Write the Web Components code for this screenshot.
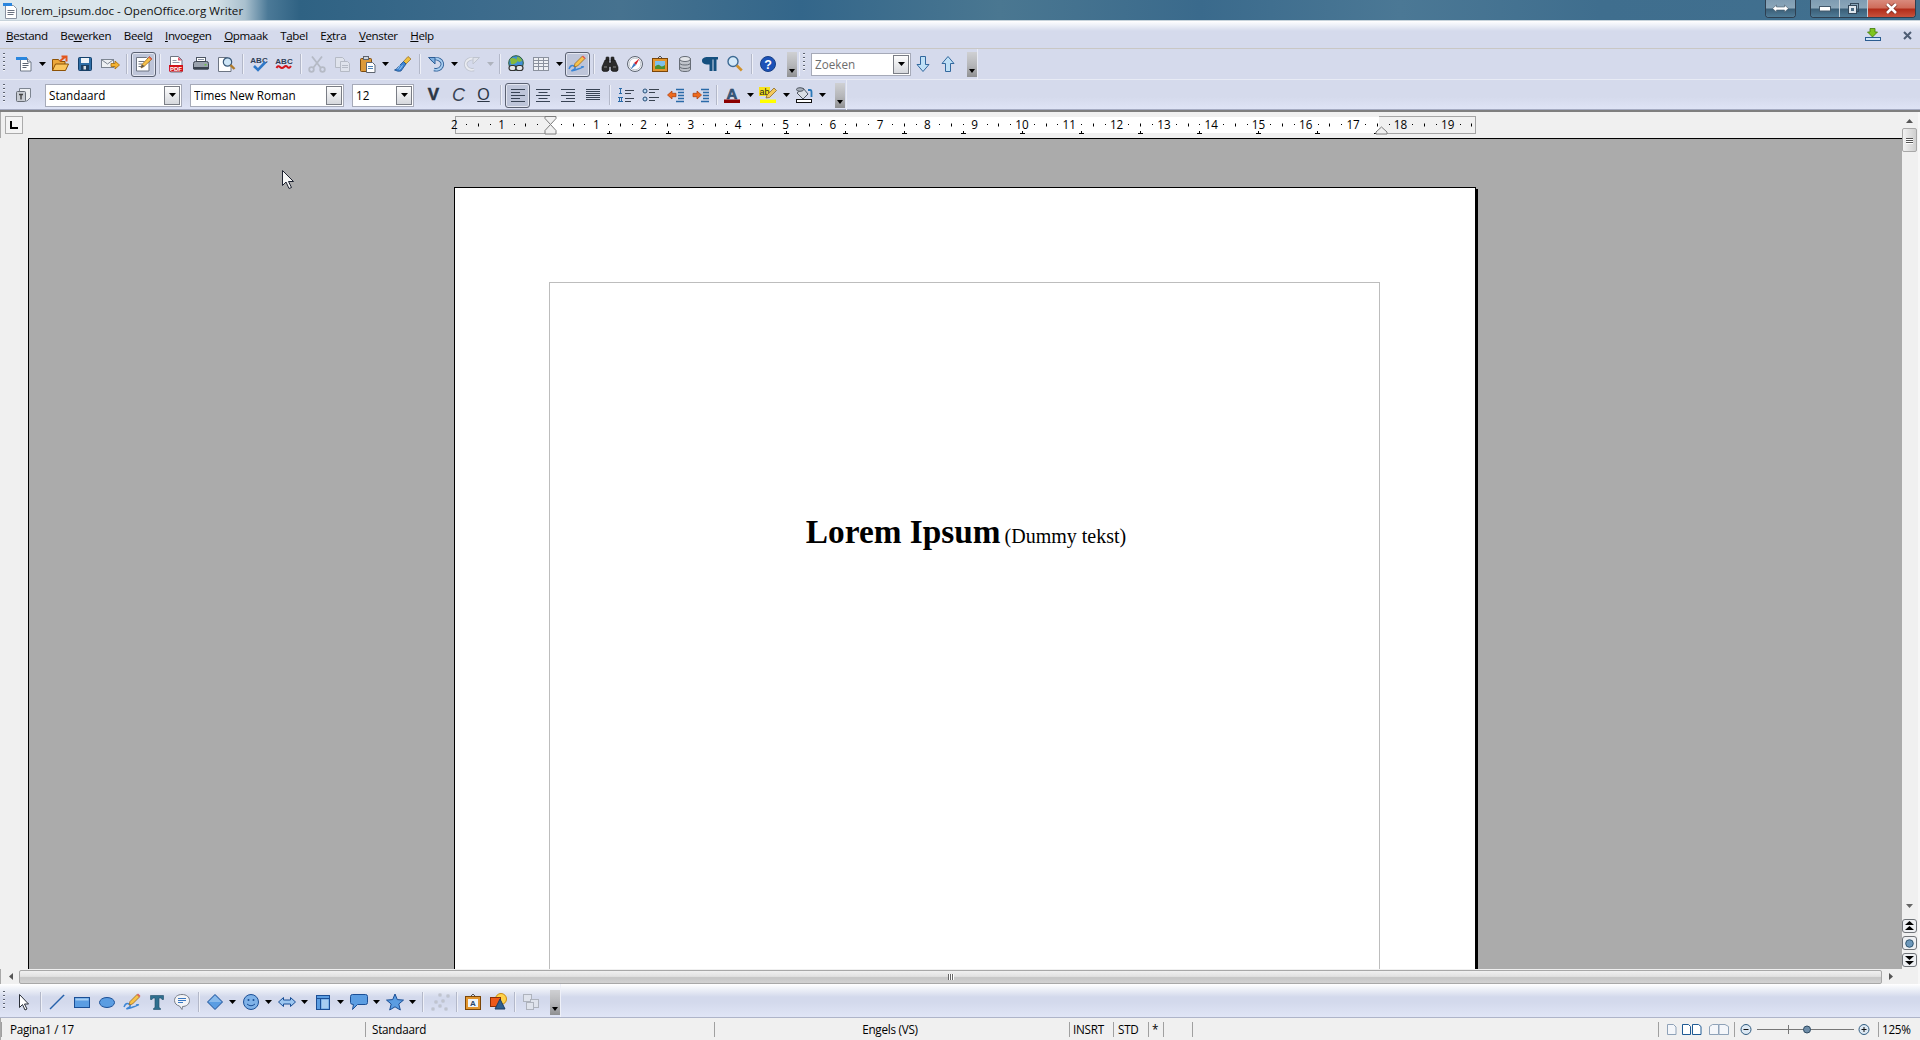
<!DOCTYPE html>
<html lang="nl">
<head>
<meta charset="utf-8">
<title>lorem_ipsum.doc - OpenOffice.org Writer</title>
<style>
html,body{margin:0;padding:0;height:1040px;overflow:hidden;background:#f0f0f0}
</style>
</head>
<body>
<oo-app>
  <oo-titlebar slot="title">lorem_ipsum.doc - OpenOffice.org Writer</oo-titlebar>
  <oo-menubar slot="menu"></oo-menubar>
  <oo-bars slot="bars">
    <oo-row end="978">
      <oo-grip w="12.5"></oo-grip>
      <oo-btn i="new"></oo-btn><oo-dd w="10"></oo-dd>
      <oo-btn i="open"></oo-btn><oo-btn i="save"></oo-btn><oo-btn i="mail"></oo-btn><oo-sep></oo-sep>
      <oo-btn i="edit" pressed></oo-btn><oo-sep></oo-sep>
      <oo-btn i="pdf"></oo-btn><oo-btn i="print"></oo-btn><oo-btn i="preview"></oo-btn><oo-sep></oo-sep>
      <oo-btn i="spell"></oo-btn><oo-btn i="autospell"></oo-btn><oo-sep></oo-sep>
      <oo-btn i="cut"></oo-btn><oo-btn i="copy"></oo-btn><oo-btn i="paste"></oo-btn><oo-dd></oo-dd>
      <oo-btn i="brush"></oo-btn><oo-sep></oo-sep>
      <oo-btn i="undo"></oo-btn><oo-dd></oo-dd><oo-btn i="redo"></oo-btn><oo-dd off></oo-dd><oo-sep></oo-sep>
      <oo-btn i="link"></oo-btn><oo-btn i="table"></oo-btn><oo-dd></oo-dd>
      <oo-btn i="draw" pressed></oo-btn><oo-sep></oo-sep>
      <oo-btn i="find"></oo-btn><oo-btn i="nav"></oo-btn><oo-btn i="gallery"></oo-btn><oo-btn i="db"></oo-btn><oo-btn i="pil"></oo-btn><oo-btn i="zoom"></oo-btn><oo-sep></oo-sep>
      <oo-btn i="help"></oo-btn>
      <oo-over style="margin-left:6.5px"></oo-over>
      <oo-grip w="11" style="margin-left:2px;border-left:1px solid #eceef7"></oo-grip>
      <oo-combo w="100" disabled>Zoeken</oo-combo>
      <oo-btn i="down" style="margin-left:-1px"></oo-btn><oo-btn i="up"></oo-btn>
      <oo-over style="margin-left:6.5px"></oo-over>
    </oo-row>
    <oo-row end="847">
      <oo-grip w="11"></oo-grip>
      <oo-btn i="styles"></oo-btn>
      <oo-combo w="137" style="margin-left:9px">Standaard</oo-combo>
      <oo-combo w="153.5" style="margin-left:8px">Times New Roman</oo-combo>
      <oo-combo w="62" style="margin-left:8.5px">12</oo-combo>
      <oo-btn style="margin-left:7px" t="V" class="b"></oo-btn>
      <oo-btn t="C"></oo-btn><oo-btn t="O"></oo-btn><oo-sep w="9"></oo-sep>
      <oo-btn i="al" pressed></oo-btn><oo-btn i="ac"></oo-btn><oo-btn i="ar"></oo-btn><oo-btn i="aj"></oo-btn><oo-sep></oo-sep>
      <oo-btn i="num"></oo-btn><oo-btn i="bul"></oo-btn><oo-btn i="dec"></oo-btn><oo-btn i="inc"></oo-btn><oo-sep w="6.5"></oo-sep>
      <oo-btn i="fc"></oo-btn><oo-dd></oo-dd><oo-btn i="hl"></oo-btn><oo-dd></oo-dd><oo-btn i="bg"></oo-btn><oo-dd></oo-dd>
      <oo-over style="margin-left:7.5px"></oo-over>
    </oo-row>
  </oo-bars>
  <oo-ruler slot="ruler"></oo-ruler>
  <oo-workspace slot="work">
    <oo-page>
      <b style="font-size:33.33px">Lorem Ipsum</b> <span style="font-size:20px">(Dummy tekst)</span>
    </oo-page>
  </oo-workspace>
  <oo-vscroll slot="vs"></oo-vscroll>
  <oo-hscroll slot="hs"></oo-hscroll>
  <oo-drawbar slot="draw">
    <oo-grip w="11"></oo-grip>
    <oo-btn i="sel"></oo-btn><oo-sep></oo-sep>
    <oo-btn i="line"></oo-btn><oo-btn i="rect"></oo-btn><oo-btn i="ell"></oo-btn><oo-btn i="free"></oo-btn><oo-btn i="tt"></oo-btn><oo-btn i="cal"></oo-btn><oo-sep></oo-sep>
    <oo-btn i="dia"></oo-btn><oo-dd></oo-dd><oo-btn i="smile"></oo-btn><oo-dd></oo-dd><oo-btn i="arr"></oo-btn><oo-dd></oo-dd><oo-btn i="flow"></oo-btn><oo-dd></oo-dd><oo-btn i="bub"></oo-btn><oo-dd></oo-dd><oo-btn i="star"></oo-btn><oo-dd></oo-dd><oo-sep w="9"></oo-sep>
    <oo-btn i="pts"></oo-btn><oo-sep></oo-sep>
    <oo-btn i="fw"></oo-btn><oo-btn i="ext"></oo-btn><oo-sep></oo-sep>
    <oo-btn i="grp"></oo-btn>
    <oo-over style="margin-left:7px"></oo-over>
  </oo-drawbar>
  <oo-status slot="status"></oo-status>
</oo-app>
<script>
const UI='"Open Sans","Noto Sans","Liberation Sans",sans-serif';
const S='#1b4f96',F='#5b9de2';
const lines=(a)=>a.map(([x1,x2,y])=>`M${x1} ${y}H${x2}`).join('');
const ICONS={
new:`<path d="M5.5 4.5h7l3.500 3.500v9h-10.500z" fill="#fff" stroke="#6f7887"/><path d="M12.500 4.500v3.500h3.500" fill="#dde2ea" stroke="#6f7887"/><rect x="1" y="3" width="11" height="3" fill="#2a86de"/><path d="M7.500 9.500h6M7.500 11.500h6M7.500 13.500h4" stroke="#5c6472"/>`,
open:`<path d="M2.500 5.500h6l1.500 2h5v9h-12.500z" fill="#eda83a" stroke="#8d5206"/><path d="M2.500 16.500l3-6.500h13l-3 6.500z" fill="#fbc65d" stroke="#8d5206"/><path d="M10 7l5-4M11.500 2.500h5v5" fill="none" stroke="#e2561d" stroke-width="2"/>`,
save:`<rect x="3.500" y="3.500" width="13" height="13" rx="1" fill="#2f6ea6" stroke="#14406b"/><rect x="6" y="4" width="8" height="5" fill="#eef3f8"/><rect x="6" y="11" width="8" height="5.500" fill="#1d3f60"/><rect x="8.500" y="12" width="2.500" height="3.500" fill="#d6dde5"/>`,
mail:`<rect x="1.500" y="5.500" width="12" height="8" fill="#eef0f3" stroke="#7d8591"/><path d="M2 6l5.500 4 5.500-4" fill="none" stroke="#7d8591"/><path d="M11 9.500h4v-2.500l4.500 4-4.500 4v-2.500h-4z" fill="#f4b230" stroke="#a56a0c" stroke-width=".8"/>`,
edit:`<path d="M3.500 3.500h10l2.500 2.500v11h-12.500z" fill="#fff" stroke="#6d7583"/><path d="M5.500 7.500h6M5.500 10h4M5.500 12.500h3" stroke="#6d7583"/><path d="M8 14l1-3.500 7.500-8 2.500 2.500-8 7.500z" fill="#f7c24a" stroke="#8f5c10" stroke-width=".7"/><path d="M15.500 3.500l1-1 2.500 2.500-1 1z" fill="#e25a5a"/><path d="M8 14l1-3.500 2.500 1.500z" fill="#555"/>`,
pdf:`<path d="M4.500 2.500h8l3.500 3.500v12h-11.500z" fill="#fff" stroke="#6d7583"/><path d="M6.500 6.500h4M6.500 8.500h7" stroke="#9098a6"/><path d="M12 3v3.500h4z" fill="#e0566a"/><rect x="3" y="11" width="14" height="6.500" fill="#d3131a"/><text x="10" y="16.500" font-size="6" font-weight="700" text-anchor="middle" fill="#fff" font-family="Liberation Sans">PDF</text>`,
print:`<rect x="5.500" y="3.500" width="9" height="5" fill="#fff" stroke="#4c5563"/><path d="M7 5.500h6" stroke="#8792a3"/><path d="M2.500 9.500q0-2 2-2h11q2 0 2 2v5.500h-15z" fill="#9aa2ad" stroke="#3e4652"/><rect x="3" y="13" width="14" height="2.500" fill="#39424e"/><rect x="13.500" y="10" width="2" height="1.500" fill="#6cc04a"/>`,
preview:`<path d="M2.500 3.500h9l3.500 3.500v10.500h-12.500z" fill="#fff" stroke="#6d7583"/><circle cx="11.500" cy="8" r="4.200" fill="#cfe6f7" stroke="#3b5a7a" stroke-width="1.200"/><path d="M14.500 11l4 4" stroke="#b07a2a" stroke-width="2.400"/>`,
spell:`<text x="10" y="8.500" font-size="8" font-weight="700" text-anchor="middle" fill="#2e3f57" font-family="Liberation Sans">ABC</text><path d="M5 12l4 4 7.500-8" fill="none" stroke="#2f78c8" stroke-width="2.600"/>`,
autospell:`<text x="10" y="9.500" font-size="8" font-weight="700" text-anchor="middle" fill="#2e3f57" font-family="Liberation Sans">ABC</text><path d="M2.500 14q1.500-3 3.500-1t4 0 3.500 0 3.500-1" fill="none" stroke="#d4131a" stroke-width="2"/>`,
cut:`<g fill="none" stroke="#b5bac5" stroke-width="1.800"><path d="M5 2.500l8.500 11M15 2.500l-8.500 11"/><circle cx="4.500" cy="15.500" r="2.300"/><circle cx="15.500" cy="15.500" r="2.300"/></g>`,
copy:`<g fill="#dfe3ec" stroke="#b5bac5"><path d="M3.500 3.500h7l2 2v8h-9z"/><path d="M8.500 7.500h7l2 2v8h-9z"/></g><path d="M10 11.500h6M10 13.500h6" stroke="#b5bac5"/>`,
paste:`<rect x="3.500" y="4.500" width="11" height="13" rx="1" fill="#dd9a3a" stroke="#7b4c10"/><rect x="6.500" y="2.500" width="5" height="3" fill="#cfd5dd" stroke="#5d6470"/><path d="M9.500 8.500h6l2.500 2.500v7.500h-8.500z" fill="#fff" stroke="#5d6470"/><path d="M11 12.500h5M11 14.500h5" stroke="#4f82b8"/>`,
brush:`<path d="M15 2.500l3 2.500-5 5-2.500-2.500z" fill="#eec03f" stroke="#93691a" stroke-width=".7"/><path d="M10.500 7.500l2.500 2.500-5 7q-3 1-6.500-1 3-1 3.500-3z" fill="#3e86d4" stroke="#1a4d88" stroke-width=".8"/><path d="M7 11l-2.500 4M9.500 11.500l-3 4" stroke="#bcdcf7" stroke-width=".8"/>`,
undo:`<path d="M5 6.500a6.500 5.500 0 1 1 3 9" fill="none" stroke="#2f5f97" stroke-width="3.600"/><path d="M5 6.500a6.500 5.500 0 1 1 3 9" fill="none" stroke="#a8cdf0" stroke-width="1.800"/><path d="M2.500 3.500h6.500v6.500z" fill="#7fb0e0" stroke="#2f5f97"/>`,
redo:`<g fill="none"><path d="M15 6.500a6.500 5.500 0 1 0-3 9" stroke="#bfc4cf" stroke-width="3.600"/><path d="M15 6.500a6.500 5.500 0 1 0-3 9" stroke="#e9ebf1" stroke-width="1.800"/></g><path d="M17.500 3.500h-6.500v6.500z" fill="#dfe2ea" stroke="#bfc4cf"/>`,
link:`<circle cx="10" cy="9" r="7.300" fill="#3f8ed8" stroke="#2a5c3a"/><path d="M4 5q3-2 6 0t0 4-5 1zM11 3q4 0 5 4l-3 1q-3-2-2-5z" fill="#86b93c"/><rect x="3" y="11.500" width="7" height="5" rx="2.500" fill="#e4e6ea" stroke="#333" stroke-width="1.200"/><rect x="10" y="11.500" width="7" height="5" rx="2.500" fill="#e4e6ea" stroke="#333" stroke-width="1.200"/>`,
table:`<rect x="2.500" y="3.500" width="15" height="13" fill="#eef0f5" stroke="#8b919e"/><path d="M2.500 6.500h15M2.500 9.500h15M2.500 12.500h15M7.500 3.500v13M12.500 3.500v13" stroke="#8b919e"/>`,
draw:`<path d="M2 15q2-5 5-3t-1 4 5-1 3-2" fill="none" stroke="#3c86d6" stroke-width="1.500"/><path d="M7 13l1-3.500 7.500-7.500 2.500 2.500-7.500 7.500z" fill="#f7c24a" stroke="#8f5c10" stroke-width=".7"/><path d="M15 2.500l1-1 2.500 2.500-1 1z" fill="#e25a5a"/>`,
find:`<g fill="#2b2b2b" stroke="#111" stroke-width=".6"><rect x="6" y="3" width="3" height="4" rx=".8"/><rect x="11" y="3" width="3" height="4" rx=".8"/><path d="M5 6h4v3h2v-3h4l3 7v3q0 1.500-3.500 1.500t-3.500-2v-3h-2v3q0 2-3.500 2t-3.500-1.500v-3z"/></g><path d="M4 13h3M13 13h3" stroke="#888"/>`,
nav:`<circle cx="10" cy="10" r="7.500" fill="#eef1f6" stroke="#5d6470"/><circle cx="10" cy="10" r="5.800" fill="#fff" stroke="#c7ccd4"/><path d="M14.500 4.500l-3.500 6.500-2-2z" fill="#d5202a"/><path d="M5.500 15.500l3.500-6.500 2 2z" fill="#3a78c2"/>`,
gallery:`<path d="M7 5l3-3 3 3" fill="none" stroke="#555"/><rect x="2.500" y="4.500" width="15" height="13" fill="#e1952e" stroke="#7b4608"/><rect x="5" y="7" width="10" height="8" fill="#7fc0ea"/><path d="M5 15v-2.500q3-3 5-1t5-.5v4z" fill="#4a8f2f"/>`,
db:`<path d="M4.500 5v10q0 2.500 5.500 2.500t5.500-2.500v-10z" fill="#bfc3ca" stroke="#666c75"/><ellipse cx="10" cy="5" rx="5.500" ry="2.500" fill="#e3e5e9" stroke="#666c75"/><path d="M4.500 8.500q0 2.500 5.500 2.500t5.500-2.500M4.500 12q0 2.500 5.500 2.500t5.500-2.500" fill="none" stroke="#666c75"/>`,
pil:`<path d="M7.500 3H18v2.500h-1.500V17h-3V5.500h-1V17h-3v-6.500H8C4.500 10.500 2 9.500 2 6.800S4.500 3 7.500 3z" fill="#15507f"/>`,
zoom:`<circle cx="8" cy="7.500" r="5" fill="#d4e9f9" stroke="#3d6a93" stroke-width="1.400"/><path d="M11.800 11.500l5 5" stroke="#d0912a" stroke-width="2.600"/>`,
help:`<circle cx="10" cy="10" r="7.500" fill="#1c52b8" stroke="#173f86"/><text x="10" y="14.500" font-size="12.500" font-weight="700" text-anchor="middle" fill="#fff" font-family="Liberation Sans">?</text>`,
down:`<path d="M7.500 2.500h5v8h3.500l-6 7-6-7h3.500z" fill="#bfe0f6" stroke="#32689e" stroke-linejoin="round"/>`,
up:`<path d="M7.500 17.500h5v-8h3.500l-6-7-6 7h3.500z" fill="#bfe0f6" stroke="#32689e" stroke-linejoin="round"/>`,
styles:`<path d="M5.500 3.500h11v9l-3.500 3.500h-7.500z" fill="#eceef1" stroke="#7d8591"/><rect x="2.500" y="6.500" width="9" height="10" rx="1" fill="#c8ccd3" stroke="#666c75"/><path d="M5 9.500h4M7 9.500v5" stroke="#444" stroke-width="1.400"/>`,
al:`<path d="${lines([[3,17,4.500],[3,12,7.500],[3,17,10.500],[3,12,13.500],[3,17,16.500]])}" stroke="#384354"/>`,
ac:`<path d="${lines([[3,17,4.500],[5.500,14.500,7.500],[3,17,10.500],[5.500,14.500,13.500],[3,17,16.500]])}" stroke="#384354"/>`,
ar:`<path d="${lines([[3,17,4.500],[8,17,7.500],[3,17,10.500],[8,17,13.500],[3,17,16.500]])}" stroke="#384354"/>`,
aj:`<path d="${lines([[3,17,4.500],[3,17,6.500],[3,17,8.500],[3,17,10.500],[3,17,12.500],[3,17,14.500]])}" stroke="#384354"/>`,
num:`<path d="M3 3.500h3M4.500 3.500v5M3 8.500h3M2 12.500h5M3.500 12.500v4.500M5.500 12.500v4.500M2 16.500h5" stroke="#2a6aa8" fill="none"/><path d="M9 5.500h9M9 8.500h6M9 13.500h9M9 16.500h6" stroke="#3a4350"/>`,
bul:`<circle cx="4" cy="6" r="2" fill="#b8d7f0" stroke="#274e78"/><circle cx="4" cy="14" r="2" fill="#b8d7f0" stroke="#274e78"/><path d="M8 4.500h10M8 7.500h6M8 12.500h10M8 15.500h6" stroke="#3a4350"/>`,
dec:`<path d="M1.500 10l4.500-4v2.300h4v3.400h-4v2.300z" fill="#ee6a1c" stroke="#a93a0a" stroke-width=".7"/><path d="M10 4.500h8M12 7.500h6M12 10.500h6M12 13.500h6M10 16.500h8" stroke="#2a6aa8" stroke-width="1.300"/>`,
inc:`<path d="M10.500 10l-4.500-4v2.300h-4v3.400h4v2.300z" fill="#ee6a1c" stroke="#a93a0a" stroke-width=".7"/><path d="M10 4.500h8M12 7.500h6M12 10.500h6M12 13.500h6M10 16.500h8" stroke="#2a6aa8" stroke-width="1.300"/>`,
fc:`<text x="10" y="13.500" font-size="15" font-weight="700" text-anchor="middle" fill="#3a5e82" stroke="#1c3553" stroke-width=".5" font-family="Liberation Sans">A</text><rect x="2" y="14.500" width="16" height="3.500" fill="#8b0000"/>`,
hl:`<rect x="1" y="2" width="11" height="9" fill="#f7e21a"/><text x="6.500" y="9.500" font-size="9" text-anchor="middle" fill="#222" font-family="Liberation Sans">ab</text><path d="M8 13l1-3 7-7 2.500 2.500-7 7z" fill="#f4c95a" stroke="#7d5a1a" stroke-width=".7"/><rect x="2" y="14.500" width="16" height="3.500" fill="#ffff00"/>`,
bg:`<path d="M3 8l6-5 5 6-5 5z" fill="#d9dde3" stroke="#4e5560"/><ellipse cx="6" cy="4.500" rx="3.500" ry="1.800" fill="#aab1bc" stroke="#4e5560"/><path d="M14 5h2q1.500 0 1.500 2v5" fill="none" stroke="#2a78b8" stroke-width="1.800"/><rect x="2.500" y="14.500" width="15" height="3" fill="#fff" stroke="#111"/>`,
sel:`<path d="M5.500 2.500v13l3-3 2.500 5.500 2-1-2.500-5h4z" fill="#fff" stroke="#2a2f38" stroke-linejoin="round"/>`,
line:`<path d="M3 17L17 3" stroke="${S}" stroke-width="1.200"/><path d="M3.700 17L17.700 3" stroke="${F}" stroke-width=".7"/>`,
rect:`<rect x="2.500" y="5.500" width="15" height="10" fill="${F}" stroke="${S}"/><rect x="3.500" y="6.500" width="13" height="2" fill="#a6cdf2"/>`,
ell:`<ellipse cx="10" cy="10.500" rx="7.500" ry="5" fill="${F}" stroke="${S}"/>`,
free:`<path d="M2 15q2-5 5-3t-1 4 5-1 3-2" fill="none" stroke="#3c86d6" stroke-width="1.500"/><path d="M7 13l1-3.500 7-7 2.500 2.500-7 7z" fill="#f7c24a" stroke="#8f5c10" stroke-width=".7"/><path d="M15 2.500l1-1 2.500 2.500-1 1z" fill="#e25a5a"/>`,
tt:`<path d="M3.500 3.500h13v4h-1.500l-1-1.500h-2v9.500l1.500 1v1h-7v-1l1.500-1v-9.500h-2l-1 1.500h-1.500z" fill="#2f6f8f" stroke="#1e4c66" stroke-width=".6"/>`,
cal:`<path d="M10 2.500c4.500 0 7.500 2.500 7.500 6s-3 6-7 6l-.5 3-2.500-3.500c-3-.5-5-3-5-5.500 0-3.500 3-6 7.500-6z" fill="#f3f4f7" stroke="#777d88"/><path d="M6 6.500h8M6 8.500h8M6 10.500h5" stroke="#3a78c2"/>`,
dia:`<path d="M10 2.500l7.500 7.500-7.500 7.500-7.500-7.500z" fill="${F}" stroke="${S}"/><path d="M10 3.500l-6.500 6.500h13z" fill="#9cc6f0" opacity=".7"/>`,
smile:`<circle cx="10" cy="10" r="7.500" fill="#7fb2e8" stroke="${S}"/><circle cx="7.500" cy="8" r="1" fill="${S}"/><circle cx="12.500" cy="8" r="1" fill="${S}"/><path d="M6 12q4 3.500 8 0" fill="none" stroke="${S}"/>`,
arr:`<path d="M1.500 10l5-4.500v2.500h7v-2.500l5 4.500-5 4.500v-2.500h-7v2.500z" fill="#9cc6f0" stroke="${S}"/>`,
flow:`<rect x="3.500" y="3.500" width="13" height="14" fill="${F}" stroke="${S}"/><path d="M3.500 6.500h13M7.500 6.500v11" stroke="${S}"/><rect x="8.500" y="7.500" width="7" height="9" fill="#a6cdf2"/>`,
bub:`<path d="M3.500 2.500h13q2 0 2 2v6q0 2-2 2h-8l-5 5 1-5q-3 0-3-2v-6q0-2 2-2z" fill="${F}" stroke="${S}"/>`,
star:`<path d="M10 2l2.300 5.600 6.200.5-4.700 3.900 1.500 6L10 14.800 4.700 18l1.500-6-4.700-3.900 6.200-.5z" fill="${F}" stroke="${S}"/>`,
pts:`<g fill="#dfe3ec" stroke="#aeb3bd" stroke-width=".8"><rect x="9" y="2" width="2" height="2"/><rect x="2" y="16" width="2" height="2"/><rect x="15" y="16" width="2" height="2"/><rect x="5" y="9" width="2" height="2"/><rect x="12" y="8" width="2" height="2"/><rect x="9" y="13" width="2" height="2"/><rect x="17" y="3" width="2" height="2"/></g>`,
fw:`<path d="M7 5l3-3 3 3" fill="none" stroke="#555"/><rect x="2.500" y="4.500" width="15" height="13" fill="#e1952e" stroke="#7b4608"/><rect x="5" y="7" width="10" height="8" fill="#eef3f8"/><text x="10" y="14" font-size="8" font-weight="700" text-anchor="middle" fill="#27466a" font-family="Liberation Sans">A</text>`,
ext:`<circle cx="13" cy="7" r="5.500" fill="#ffd24a" stroke="#c98a10"/><rect x="2.500" y="5.500" width="10" height="9" fill="#ee5a1a" stroke="#8d2f06"/><path d="M12 7l5 10h-10z" fill="#2f5f8f" stroke="#1c3d60"/>`,
grp:`<g fill="#dfe3ec" stroke="#aeb3bd"><rect x="2.500" y="2.500" width="8" height="7"/><rect x="9.500" y="7.500" width="8" height="8"/><rect x="5.500" y="10.500" width="7" height="7"/></g>`,
dl:`<rect x="1.500" y="9.500" width="15" height="3" fill="#cfe4f7" stroke="#2a5c90"/><path d="M6 .5h5v3.500h2.500l-5 5-5-5h2.500z" fill="#7fc51e" stroke="#3f7a08" stroke-width=".8"/>`
};
const ic=(n,w=20,h=20)=>`<svg xmlns="http://www.w3.org/2000/svg" width="${w}" height="${h}" viewBox="0 0 ${w} ${h}" style="display:block">${ICONS[n]}</svg>`;
const def=(n,css,render)=>customElements.define(n,class extends HTMLElement{
  connectedCallback(){ if(this.shadowRoot) return; const r=this.attachShadow({mode:'open'}); r.innerHTML=`<style>${css}</style>`+render(this); }
});
const arrowDown=(c='#000')=>`<svg width="7" height="4" viewBox="0 0 7 4" style="display:block"><path d="M0 0h7L3.500 4z" fill="${c}"/></svg>`;

def('oo-app',`
:host{display:flex;flex-direction:column;width:1920px;height:1040px;overflow:hidden;background:#f0f0f0;font-family:${UI};color:#000}
.body{display:flex;height:857px}
.main{display:flex;flex-direction:column;width:1902px}
.work{flex:1;min-height:0;display:flex}
`,()=>`<slot name="title"></slot><slot name="menu"></slot><slot name="bars"></slot>
<div class="body"><div class="main"><slot name="ruler"></slot><div class="work"><slot name="work"></slot></div></div><slot name="vs"></slot></div>
<slot name="hs"></slot><slot name="draw"></slot><slot name="status"></slot>`);

def('oo-titlebar',`
:host{display:flex;align-items:flex-start;height:21px;box-sizing:border-box;border-bottom:1px solid #c7d3db;
background:linear-gradient(90deg,#dde8ee 0,#d5e1e8 215px,#a9c0ce 245px,#4b7997 268px,#2f6283 300px,#3c6b8c 480px,#46728f 620px,#33668a 800px,#4a7791 1000px,#3a6a8c 1200px,#4b7895 1400px,#3f6e8e 1600px,#41708f 1920px);
font:11.6px ${UI};position:relative}
.ico{width:16px;height:18px;margin:2px 0 0 3px}
.t{margin-left:2px;line-height:21px;white-space:nowrap;color:#111}
.ctl{margin-left:auto;display:flex;margin-right:4px}
.g{display:flex;height:18px;box-sizing:border-box;border:1px solid #2e3f50;border-top:0;border-radius:0 0 4px 4px;overflow:hidden;box-shadow:0 0 0 1px rgba(255,255,255,.35) inset}
.b{display:flex;align-items:center;justify-content:center;height:100%;background:linear-gradient(#7f9cb2,#8aa6b9 45%,#3b5f78 55%,#4f7b96)}
.b+.b{border-left:1px solid #c5d0d9}
.c{background:linear-gradient(#d98a7c,#cf6d5b 45%,#b22d1a 55%,#c8523c)}
`,()=>`<span class="ico"><svg width="16" height="18" viewBox="0 0 16 18"><path d="M2.500 3.500h8l3 3v10h-11z" fill="#fff" stroke="#8892a0"/><rect x="0" y="1" width="9" height="3" fill="#2a86de"/><path d="M4.500 8.500h7M4.500 10.500h7M4.500 12.500h6" stroke="#6a7280"/></svg></span>
<span class="t"><slot></slot></span>
<span class="ctl">
<span class="g" style="width:31px;margin-right:14px"><span class="b" style="width:100%"><svg width="17" height="9" viewBox="0 0 17 9"><path d="M.5 4.500L4.500 1v2h8V1l4 3.500-4 3.500V6h-8v2z" fill="#fff" stroke="#43586a" stroke-width=".6"/></svg></span></span>
<span class="g"><span class="b" style="width:28px"><svg width="12" height="6" viewBox="0 0 12 6"><rect x=".5" y=".5" width="11" height="4.500" fill="#fff" stroke="#43586a"/></svg></span>
<span class="b" style="width:27px"><svg width="13" height="12" viewBox="0 0 13 12"><rect x="3.500" y=".5" width="8" height="8" fill="none" stroke="#33485a"/><rect x="1.500" y="2.500" width="8" height="8" fill="#dfe6ec" stroke="#33485a"/><rect x="4" y="5" width="3" height="3" fill="#4a6a82"/></svg></span>
<span class="b c" style="width:47px"><svg width="13" height="11" viewBox="0 0 13 11"><path d="M2 1l9 9M11 1l-9 9" stroke="#7a2a1e" stroke-width="4"/><path d="M2 1l9 9M11 1l-9 9" stroke="#fff" stroke-width="2.600"/></svg></span></span>
</span>`);

def('oo-menubar',`
:host{display:flex;align-items:center;height:28px;box-sizing:border-box;border-bottom:1px solid #c9c7c4;padding:1px 0 0 6px;
background:linear-gradient(#fff 0,#eef1f8 4px,#d5daec 10px,#d5daec 100%);font:11.6px ${UI};letter-spacing:-.38px}
.m{display:flex;gap:12.6px;color:#050505;white-space:nowrap}
u{text-decoration-thickness:1px}
.r{margin-left:auto;display:flex;align-items:center}
`,()=>`<div class="m"><span><u>B</u>estand</span><span>Be<u>w</u>erken</span><span>Beel<u>d</u></span><span><u>I</u>nvoegen</span><span><u>O</u>pmaak</span><span>T<u>a</u>bel</span><span>E<u>x</u>tra</span><span><u>V</u>enster</span><span><u>H</u>elp</span></div>
<div class="r"><span style="margin-right:21px"><svg width="18" height="14" viewBox="0 0 18 14" style="display:block">${ICONS.dl}</svg></span><span style="margin-right:8px;margin-top:1px"><svg width="9" height="9" viewBox="0 0 9 9" style="display:block"><path d="M1 1l7 7M8 1l-7 7" stroke="#4e5d73" stroke-width="2"/></svg></span></div>`);

def('oo-bars',`
:host{display:block;height:63px;box-sizing:border-box;border-bottom:2px solid #7f7f7f;
background:linear-gradient(#d5daec 0,#d5daec 48px,#dfe4f6 61px);box-shadow:inset 0 -1px 0 #a5abc2}
`,()=>`<slot></slot>`);

def('oo-row',`
:host{display:flex;align-items:center;height:31px;box-sizing:border-box;border-bottom:1px solid #e8ebf5;white-space:nowrap}
:host(:last-child){border-bottom:0;height:30px}
.a{display:flex;align-items:center;height:100%;box-sizing:border-box;border-right:1px solid #e8ebf5}
`,(el)=>`<div class="a" style="width:${el.getAttribute('end')}px"><slot></slot></div>`);

def('oo-grip',`
:host{display:block;height:24px;position:relative;flex:none}
.g{position:absolute;left:3px;top:1px;width:2px;height:20px;background:repeating-linear-gradient(#5b6170 0 1px,#f2f4fa 1px 2px,transparent 2px 4px)}
`,(el)=>{el.style.width=(el.getAttribute('w')||13)+'px';return `<div class="g"></div>`});

def('oo-btn',`
:host{display:flex;flex:none;width:25px;height:25px;align-items:center;justify-content:center;box-sizing:border-box;font-family:${UI}}
:host([pressed]){border:1px solid #5a6172;border-radius:3px;background:#bec5d9;box-shadow:inset 0 0 0 1px #e3e6f1}
.t{font:700 16px "Liberation Sans",sans-serif;color:#2c3645;line-height:20px}
`,(el)=>{
  const t=el.getAttribute('t');
  if(t==='V') return `<span class="t" style="font-weight:900;font-size:17px;-webkit-text-stroke:.5px #2c3645">V</span>`;
  if(t==='C') return `<span class="t" style="font:italic 400 18px/20px 'Liberation Sans',sans-serif;color:#3a4453">C</span>`;
  if(t==='O') return `<span class="t" style="font-weight:400;font-size:16px;text-decoration:underline">O</span>`;
  return ic(el.getAttribute('i'));
});

def('oo-dd',`
:host{display:flex;flex:none;height:25px;align-items:center;justify-content:center}
`,(el)=>{el.style.width=(el.getAttribute('w')||11)+'px';return arrowDown(el.hasAttribute('off')?'#aeb3bd':'#000')});

def('oo-sep',`
:host{display:flex;flex:none;height:20px;justify-content:center}
i{display:block;width:1px;height:100%;background:#b3b8c9;box-shadow:1px 0 0 #eef0f8}
`,(el)=>{el.style.width=(el.getAttribute('w')||8)+'px';return `<i></i>`});

def('oo-over',`
:host{display:flex;flex:none;width:10px;height:25px;background:linear-gradient(#cfd0d3,#b4b5b8 55%,#8f9092);align-items:flex-end;justify-content:center;padding-bottom:4px;box-sizing:border-box}
`,()=>`<svg width="6" height="4" viewBox="0 0 6 4"><path d="M0 0h6L3 4z" fill="#000"/></svg>`);

def('oo-combo',`
:host{display:flex;flex:none;height:23px;box-sizing:border-box;border:1px solid #a6aab8;background:#fff;align-items:center;font:11.7px ${UI};color:#000;padding-left:3px;position:relative}
:host([disabled]){color:#6d6d6d}
.t{flex:1;white-space:nowrap;overflow:hidden}
.b{width:16px;height:19px;margin-right:1px;box-sizing:border-box;border:1px solid #7a7d85;background:linear-gradient(#fdfdfd,#d6d8dd);display:flex;align-items:center;justify-content:center}
`,(el)=>{el.style.width=el.getAttribute('w')+'px';return `<span class="t"><slot></slot></span><span class="b">${arrowDown()}</span>`});

def('oo-ruler',`
:host{display:flex;height:26px;position:relative;flex:none;background:#f0f0f0;border-left:1px solid #a9a9a9;box-sizing:border-box}
.tab{width:18px;height:18px;margin:4px 0 0 4px;box-sizing:border-box;border:1px solid #ababab;background:#f4f4f4;display:flex;align-items:center;justify-content:center}
svg{display:block;margin-left:426px;flex:none}
text{font:11.7px ${UI};fill:#000;text-anchor:middle}
`,()=>{
  const X=449,k=47.3,z=549;
  const x=v=>Math.round(v-X)+.5;
  let s=`<rect x="${455-X+.5}" y="4.500" width="1020" height="17" fill="none" stroke="#a4a4a4"/><rect x="${550-X}" y="5" width="829" height="17" fill="#fff"/><path d="M${550-X} 4.500H${1379-X}" stroke="#f0f0f0"/><path d="M${550-X} 21.500H${1379-X}" stroke="#f0f0f0"/>`;
  for(let n=-2;n<=19;n++){
    const c=z+n*k;
    if(n!==0) s+=`<text x="${c-X}" y="17">${Math.abs(n)}</text>`;
    [.25,.5,.75].forEach((f,i)=>{
      const p=c+f*k; if(p>1473) return;
      if(Math.abs(p-z)<6) return;
      if(i===1) s+=`<path d="M${x(p)} 11.500v3" stroke="#000"/>`;
      else s+=`<rect x="${Math.round(p-X)}" y="12" width="1" height="1" fill="#000"/>`;
    });
  }
  for(let t=1;t<=14;t++){
    const p=550+59*t; if(p>1379) break;
    s+=`<path d="M${x(p)} 19v3M${x(p)-2.500} 21.500h5" stroke="#000" fill="none"/>`;
  }
  s+=`<path d="M${550.500-X-5.500} 4.500h11v2l-5.500 6 5.500 6v3.500h-11v-3.500l5.500-6-5.500-6z" fill="#f0f0f0" stroke="#7c7c7c"/>`;
  s+=`<path d="M${1381.500-X} 15l5.500 5v2h-11v-2z" fill="#f0f0f0" stroke="#7c7c7c"/>`;
  return `<div class="tab"><svg style="margin:0" width="8" height="8" viewBox="0 0 8 8"><path d="M1 0v7h7" fill="none" stroke="#000" stroke-width="2"/></svg></div><svg width="1040" height="26" viewBox="0 0 1040 26">${s}</svg>`;
});

def('oo-workspace',`
:host{display:block;width:1874px;margin-left:28px;height:100%;box-sizing:border-box;border-left:1px solid #000;border-top:1px solid #000;background:#ababab;overflow:hidden;position:relative}
.cur{position:absolute;left:253px;top:31px}
`,()=>`<slot></slot><svg class="cur" width="13" height="20" viewBox="0 0 13 20"><path d="M.5.500v15l3.500-3.500 3 6.500 2.500-1-3-6h5z" fill="#f6f6f6" stroke="#1d2230" stroke-linejoin="round"/></svg>`);

def('oo-page',`
:host{display:block;width:1022px;height:1000px;box-sizing:border-box;margin:48px 0 0 425px;background:#fff;border:1px solid #000;box-shadow:2px 2px 0 #000;padding:94px 0 0 94px;font-family:"Liberation Serif","Times New Roman",serif;color:#000}
.box{width:831px;height:900px;box-sizing:border-box;border:1px solid #bdbdbd;padding-top:230px;text-align:center;white-space:nowrap}
.l{padding-left:3px}
`,()=>`<div class="box"><div class="l"><slot></slot></div></div>`);

def('oo-vscroll',`
:host{display:flex;flex-direction:column;align-items:center;width:18px;height:857px;box-sizing:border-box;padding:0 2px 0 1px;background:#f0f0f0;flex:none;border-right:2px solid #f7f7f7}
.ua{margin-top:7px;display:block}
.th{margin-top:5px;width:15px;height:24px;box-sizing:border-box;border:1px solid #a8a8a8;border-radius:2px;background:linear-gradient(90deg,#f2f2f2,#e0e0e0 50%,#cfcfcf);display:flex;flex-direction:column;justify-content:center;align-items:center;gap:1px}
.th i{display:block;width:7px;height:1px;background:#555;box-shadow:0 1px 0 #fff}
.sp{flex:1}
.b{width:15px;height:14px;box-sizing:border-box;border:1px solid #6f7378;border-radius:3px;background:#eef0f3;display:flex;align-items:center;justify-content:center;margin-top:3px}
`,()=>`<svg class="ua" width="7" height="4" viewBox="0 0 7 4"><path d="M3.500 0L7 4H0z" fill="#555"/></svg>
<div class="th"><i></i><i></i><i></i></div><div class="sp"></div>
<svg style="display:block;margin-bottom:8px" width="7" height="4" viewBox="0 0 7 4"><path d="M0 0h7L3.500 4z" fill="#666"/></svg>
<div class="b"><svg width="9" height="10" viewBox="0 0 9 10"><path d="M4.500 0L9 4H0zM4.500 5L9 9H0z" fill="#000"/></svg></div>
<div class="b"><svg width="9" height="9" viewBox="0 0 9 9"><circle cx="4.500" cy="4.500" r="3.800" fill="#6d98bb" stroke="#2f5570"/></svg></div>
<div class="b" style="margin-bottom:2px"><svg width="9" height="10" viewBox="0 0 9 10"><path d="M0 1h9L4.500 5zM0 6h9L4.500 10z" fill="#000"/></svg></div>`);

def('oo-hscroll',`
:host{display:flex;align-items:center;height:15px;flex:none;background:#f0f0f0;box-sizing:border-box;border-left:1px solid #a9a9a9;border-right:2px solid #f7f7f7}
.th{margin-left:6px;width:1863px;height:14px;box-sizing:border-box;border:1px solid #a8a8a8;border-radius:2px;background:linear-gradient(#f0f0f0,#e2e2e2 45%,#c6c6c6 55%,#d2d2d2);display:flex;justify-content:center;align-items:center;gap:1px}
.th i{display:block;width:1px;height:6px;background:#666;box-shadow:1px 0 0 #fff}
.a{display:block;flex:none}
`,()=>`<svg class="a" style="margin-left:8px" width="4" height="7" viewBox="0 0 4 7"><path d="M4 0v7L0 3.500z" fill="#555"/></svg><div class="th"><i></i><i></i><i></i></div><svg class="a" style="margin-left:7px" width="4" height="7" viewBox="0 0 4 7"><path d="M0 0v7l4-3.500z" fill="#555"/></svg>`);

def('oo-drawbar',`
:host{display:block;height:34px;flex:none;box-sizing:border-box;border-bottom:1px solid #aeb4c9;
background:linear-gradient(#fff 0,#eef1f8 5px,#d3d9ec 13px,#d3d9ec 18px,#e0e5f6 33px)}
.a{display:flex;align-items:center;width:561px;height:33px;padding-top:3px;box-sizing:border-box;border-right:1px solid #eef0f8}
`,()=>`<div class="a"><slot></slot></div>`);

def('oo-status',`
:host{display:flex;height:22px;flex:none;background:#f0f0f0;font:11.7px ${UI};letter-spacing:-.25px;color:#000;align-items:center;white-space:nowrap;border-left:1px solid #a9a9a9;box-sizing:border-box}
.s{height:15px;display:flex;align-items:center;box-sizing:border-box;border-left:1px solid #a0a0a0;flex:none;line-height:15px}
.s:first-child{border-left:0}
`,()=>`<div class="s" style="width:364px;padding-left:8px">Pagina1 / 17</div>
<div class="s" style="width:349px;padding-left:6px">Standaard</div>
<div class="s" style="width:355px;justify-content:center;padding-right:4px">Engels (VS)</div>
<div class="s" style="width:44px;padding-left:3px">INSRT</div>
<div class="s" style="width:35px;padding-left:4px">STD</div>
<div class="s" style="width:15px;padding-left:3px">*</div>
<div class="s" style="width:29px"></div>
<div class="s" style="width:466px"></div>
<div class="s" style="width:76px;padding-left:6px;gap:5px">
<svg width="11" height="11" viewBox="0 0 11 11" style="margin-left:1px"><path d="M1.500.5h6l2.500 2.500v7.500h-8.500z" fill="#f4f6fa" stroke="#8fa2b8"/></svg>
<svg width="20" height="11" viewBox="0 0 20 11"><path d="M.5.5h6l2 2v8h-8zM10.500.5h6l2.500 2v8h-8.500z" fill="#fff" stroke="#1f5a94"/></svg>
<svg width="20" height="11" viewBox="0 0 20 11" style="margin-left:2px"><path d="M.5 2.500l3-2h6v10h-9zM10 .5h6l3.500 2v8h-9.500z" fill="#f4f6fa" stroke="#8fa2b8"/></svg></div>
<div class="s" style="width:144px;padding-left:5px">
<svg width="136" height="13" viewBox="0 0 136 13"><circle cx="6" cy="6.500" r="5" fill="#dce8f3" stroke="#2f5b80"/><path d="M3.500 6.500h5" stroke="#111"/><path d="M17 6.500h97" stroke="#777"/><path d="M48.500 2v9" stroke="#777"/><circle cx="67" cy="6.500" r="3.500" fill="#6d8ca8" stroke="#2f4a62"/><circle cx="124" cy="6.500" r="5" fill="#dce8f3" stroke="#2f5b80"/><path d="M121.500 6.500h5M124 4v5" stroke="#111"/></svg></div>
<div class="s" style="padding-left:3px">125%</div>`);
</script>
</body>
</html>
